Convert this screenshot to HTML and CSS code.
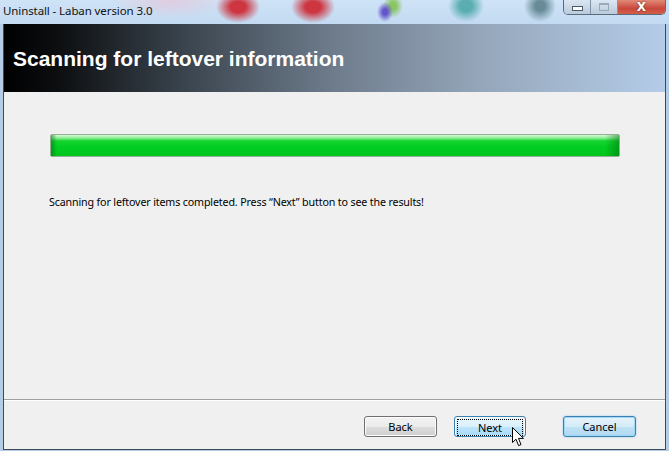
FILE: index.html
```html
<!DOCTYPE html>
<html lang="en">
<head>
    <meta charset="UTF-8">
    <title>Uninstall - Laban version 3.0</title>
    <link rel="stylesheet" href="styles.css">
</head>
<body>
    <div class="window">
        <!-- title bar -->
        <div class="titlebar">
            <span class="title">Uninstall - Laban version 3.0</span>
            <div class="caption">
                <span class="cap-btn cap-min"><i class="min-glyph"></i></span>
                <span class="cap-btn cap-max"><i class="max-glyph"></i></span>
                <span class="cap-btn cap-close">X</span>
            </div>
        </div>

        <div class="client">
            <div class="header">
                <h1>Scanning for leftover information</h1>
            </div>

            <div class="main">
                <div class="progress"><div class="progress-fill"></div></div>
                <p class="status">Scanning for leftover items completed. Press “Next” button to see the results!</p>
            </div>

            <div class="separator"></div>

            <div class="footer">
                <button class="btn">Back</button>
                <button class="btn btn-hover">
                    <span class="focus">Next</span>
                    <svg class="cursor" width="14" height="21" viewBox="0 0 14 21">
                        <path d="M0.5 0.5 L0.5 15.5 L4 12.2 L6.6 18.6 L9 17.6 L6.5 11.4 L11.5 11.4 Z" fill="#fff" stroke="#000" stroke-width="1" stroke-linejoin="round"/>
                    </svg>
                </button>
                <button class="btn btn-default">Cancel</button>
            </div>
        </div>
    </div>
</body>
</html>
```

FILE: styles.css
```css
body {
    margin: 0;
    font-family: "Noto Sans", "Open Sans", sans-serif;
    background: #b8d0ea;
}

.window {
    width: 669px;
    height: 451px;
    overflow: hidden;
    background: #b4cce6;
}

/* title bar with blurred desktop behind the glass */
.titlebar {
    height: 24px;
    display: flex;
    align-items: flex-start;
    background:
        radial-gradient(ellipse 22px 16px at 238px 7px, rgba(205, 45, 55, 0.95) 35%, rgba(205, 45, 55, 0) 100%),
        radial-gradient(ellipse 22px 16px at 313px 7px, rgba(205, 45, 55, 0.95) 35%, rgba(205, 45, 55, 0) 100%),
        radial-gradient(ellipse 8px 10px at 385px 12px, rgba(90, 70, 200, 0.9) 30%, rgba(90, 70, 200, 0) 100%),
        radial-gradient(ellipse 10px 12px at 393px 6px, rgba(120, 190, 60, 0.8) 30%, rgba(120, 190, 60, 0) 100%),
        radial-gradient(ellipse 18px 16px at 466px 6px, rgba(70, 165, 165, 0.85) 35%, rgba(70, 165, 165, 0) 100%),
        radial-gradient(ellipse 16px 16px at 540px 6px, rgba(70, 110, 120, 0.75) 30%, rgba(70, 110, 120, 0) 100%),
        radial-gradient(ellipse 60px 16px at 170px 2px, rgba(235, 190, 210, 0.6), rgba(235, 190, 210, 0) 100%),
        linear-gradient(#cfe3f6, #c2daf2);
}

.title {
    font-size: 11.5px;
    color: #111;
    padding: 3px 0 0 3px;
    letter-spacing: -0.1px;
}

.caption {
    margin-left: auto;
    margin-right: 3px;
    display: flex;
    height: 14px;
    border: 1px solid #5b6b7e;
    border-top: none;
    border-radius: 0 0 5px 5px;
    overflow: hidden;
}

.cap-btn {
    display: flex;
    align-items: center;
    justify-content: center;
    box-sizing: border-box;
}

.cap-min, .cap-max {
    width: 27px;
    background: linear-gradient(#dbe6f2, #b9cadb);
    border-right: 1px solid #8193a8;
}

.min-glyph {
    display: block;
    width: 9px;
    height: 3px;
    margin-top: 3px;
    background: #fff;
    border: 1px solid #4c5a6a;
}

.max-glyph {
    display: block;
    width: 8px;
    height: 5px;
    border: 1px solid #8e9cab;
    border-top-width: 2px;
    opacity: 0.8;
}

.cap-close {
    width: 47px;
    color: #fff;
    font: bold 12px "DejaVu Sans", sans-serif;
    background: linear-gradient(#e28a78, #c8483c 60%, #d3604a);
    text-shadow: 0 0 2px #602018;
}

/* client area */
.client {
    margin-left: 3px;
    width: 663px;
    height: 426px;
    box-sizing: border-box;
    border: 1px solid #3d4a5a;
    border-top: none;
    background: #f0f0f0;
    display: flex;
    flex-direction: column;
}

.header {
    height: 68px;
    display: flex;
    align-items: center;
    padding: 2px 0 0 9px;
    box-sizing: border-box;
    background: linear-gradient(to right, #000 0%, #0c0e10 8%, #3c4650 28%, #6e7c8c 50%, #95a6ba 72%, #b4cce8 100%);
}

.header h1 {
    margin: 0;
    color: #fff;
    font: bold 21px "Liberation Sans", Arial, sans-serif;
}

.main {
    flex: 1;
    padding: 42px 45px 0 45px;
}

.progress {
    margin-left: 1px;
    width: 570px;
    height: 23px;
    box-sizing: border-box;
    border: 1px solid #96b096;
    border-radius: 2px;
    background: #e6e6e6;
}

.progress-fill {
    height: 100%;
    background:
        linear-gradient(to right, rgba(0, 110, 20, 0.55), rgba(0, 110, 20, 0) 6px, rgba(0, 110, 20, 0) calc(100% - 14px), rgba(0, 110, 20, 0.5)),
        linear-gradient(#d6fbd6 0, #8eee96 3px, #14d42e 6px, #00cc20 60%, #04c41e 100%);
}

.status {
    margin: 38px 0 0;
    font-size: 10.7px;
    color: #000;
    letter-spacing: -0.15px;
}

.separator {
    border-top: 1px solid #a0a0a0;
    border-bottom: 1px solid #fff;
}

.footer {
    height: 48px;
    display: flex;
    justify-content: flex-end;
    align-items: flex-start;
    padding: 15px 29px 0 0;
    box-sizing: border-box;
}

.btn {
    width: 73px;
    height: 21px;
    padding: 0;
    font-family: "Noto Sans", "Open Sans", sans-serif;
    font-size: 11px;
    color: #000;
    border: 1px solid #707070;
    border-radius: 3px;
    background: linear-gradient(#f2f2f2 0%, #ebebeb 50%, #dddddd 51%, #cfcfcf 100%);
    box-shadow: inset 0 0 0 1px #fcfcfc;
    position: relative;
}

.btn + .btn {
    margin-left: 17px;
}

.btn-hover {
    width: 72px;
    border-color: #3c7fb1;
    background: linear-gradient(#eaf6fd 0%, #d9f0fc 50%, #bee6fd 51%, #a7d9f5 100%);
}

.focus {
    display: flex;
    align-items: center;
    justify-content: center;
    margin: 2px;
    height: 15px;
    border: 1px dotted #000;
}

.cursor {
    position: absolute;
    left: 57px;
    top: 10px;
}

.btn-default {
    margin-left: 37px !important;
    border-color: #3c7fb1;
    background: linear-gradient(#e6f3fb 0%, #d4ebf9 50%, #c0e2f6 51%, #b0d8f0 100%);
    box-shadow: inset 0 0 0 1px #9ed8f6, 0 0 2px #8ccbee;
}
```
